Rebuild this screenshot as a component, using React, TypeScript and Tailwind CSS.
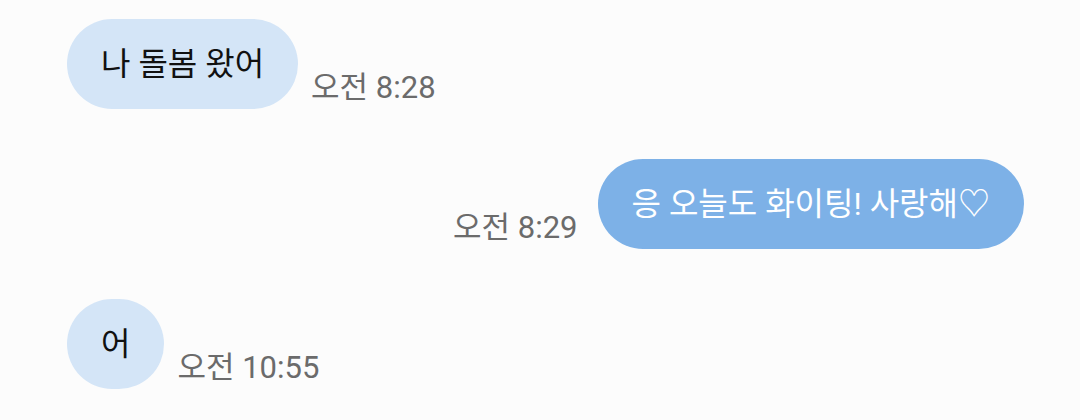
// Chat thread screenshot

const FONT = "font-['Roboto','Noto_Sans_CJK_KR',sans-serif]"

type Msg = { id: number; text: string; time: string; mine: boolean }

const MESSAGES: Msg[] = [
  { id: 1, text: '나 돌봄 왔어', time: '오전 8:28', mine: false },
  { id: 2, text: '응 오늘도 화이팅! 사랑해♡', time: '오전 8:29', mine: true },
  { id: 3, text: '어', time: '오전 10:55', mine: false },
]

function Bubble({ msg }: { msg: Msg }) {
  const time = (
    <span className="text-[31px] leading-none text-[#6b6b6b] mb-[6px] whitespace-nowrap">{msg.time}</span>
  )
  return (
    <div className={`flex items-end ${msg.mine ? 'justify-end gap-[20px]' : 'gap-[13px]'}`}>
      {msg.mine && time}
      <div
        className={`h-[90px] flex items-center rounded-full px-[34px] text-[32px] whitespace-nowrap ${
          msg.mine ? 'bg-[#7db1e7] text-white' : 'bg-[#d4e5f7] text-[#111]'
        }`}
      >
        {msg.text}
      </div>
      {!msg.mine && time}
    </div>
  )
}

export default function App() {
  return (
    <div className={`${FONT} w-[1080px] h-[420px] bg-[#fcfcfc] pl-[67px] pr-[56px] pt-[19px] flex flex-col gap-[50px]`}>
      {MESSAGES.map(m => <Bubble key={m.id} msg={m} />)}
    </div>
  )
}
